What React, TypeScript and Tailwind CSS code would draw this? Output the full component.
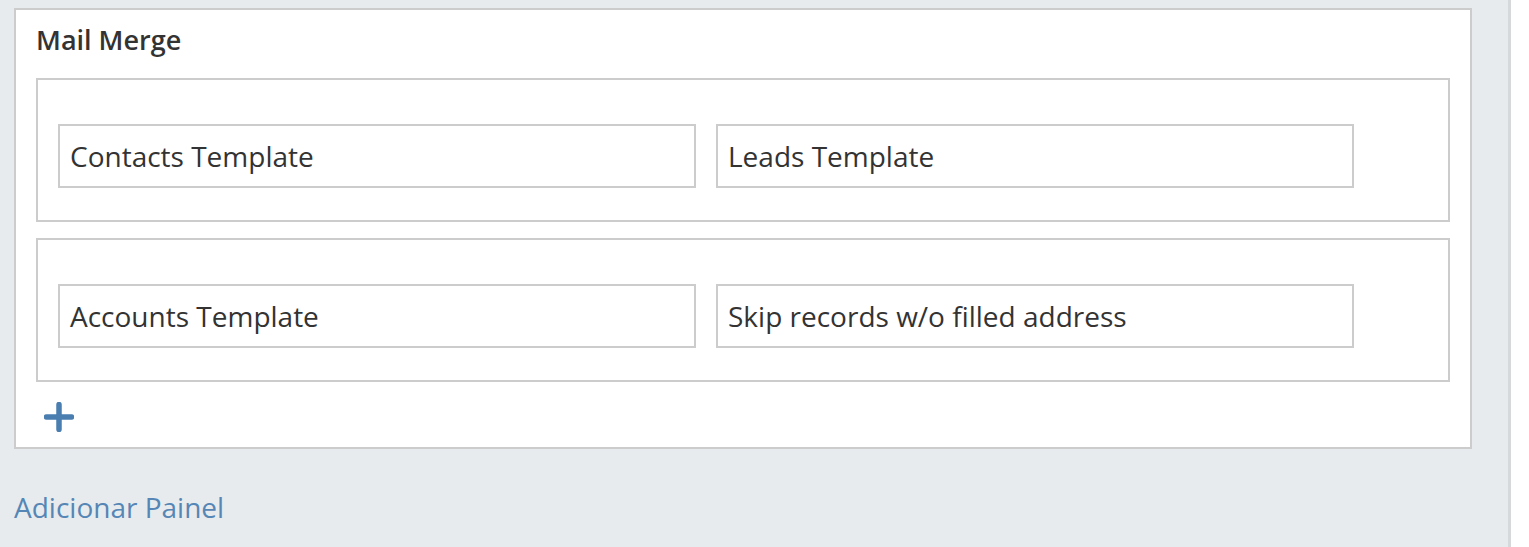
import React from 'react'

interface Cell {
  label: string;
}

const rows: Cell[][] = [
  [{ label: 'Contacts Template' }, { label: 'Leads Template' }],
  [{ label: 'Accounts Template' }, { label: 'Skip records w/o filled address' }],
];

function PlusIcon() {
  return (
    <svg width="30" height="30" viewBox="0 0 30 30" fill="none">
      <path d="M15 2.5v25M2.5 15h25" stroke="#4a7db0" strokeWidth="5.5" strokeLinecap="round" />
    </svg>
  );
}

export default function App() {
  return (
    <div className="flex h-[547px] w-full bg-white font-['Open_Sans',sans-serif] text-[#333333]">
      <div className="w-[1511px] shrink-0 bg-[#e8ebed] border-r-[3px] border-[#d6d9db] pt-2 pl-[14px]">
        {/* Panel */}
        <div className="w-[1458px] border-2 border-[#cccccc] bg-white px-5 pt-[12px] pb-[15px]">
          <div className="text-[27px] leading-[36px] font-semibold">Mail Merge</div>

          <div className="mt-[20px] flex flex-col gap-4">
            {rows.map((row, i) => (
              <div key={i} className="border-2 border-[#cccccc] px-5 pt-[44px] pb-[32px]">
                <div className="flex gap-5">
                  {row.map((cell) => (
                    <div
                      key={cell.label}
                      className="w-[638px] h-[64px] border-2 border-[#cccccc] flex items-center px-[10px] text-[28px] leading-[36px]"
                    >
                      {cell.label}
                    </div>
                  ))}
                </div>
              </div>
            ))}
          </div>

          <div className="mt-[20px] ml-[8px] h-[30px]">
            <PlusIcon />
          </div>
        </div>

        <div className="mt-[40px] text-[28px] leading-[36px] text-[#5686b6]">Adicionar Painel</div>
      </div>
    </div>
  );
}
